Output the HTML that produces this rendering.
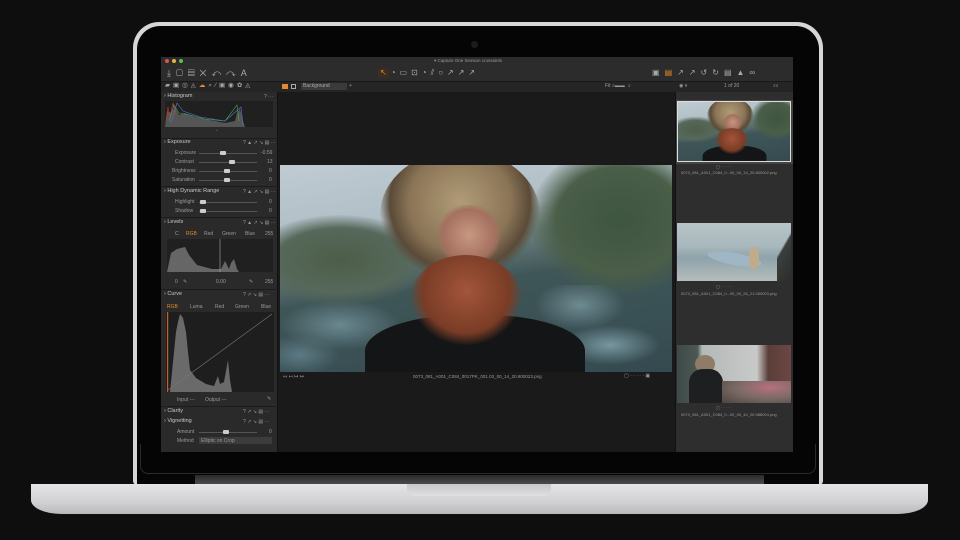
<!DOCTYPE html>
<html><head><meta charset="utf-8">
<style>
*{margin:0;padding:0;box-sizing:border-box}
body{width:960px;height:540px;background:#0e0e0e;position:relative;overflow:hidden;font-family:"Liberation Sans",sans-serif;color:#aaa}
.a{position:absolute}
.t{position:absolute;font-size:5px;color:#9a9a9a;white-space:nowrap;line-height:6px}
.h{position:absolute;font-size:5.5px;color:#c8c8c8;white-space:nowrap;line-height:7px}
.sl{position:absolute;height:1px;background:#555}
.kn{position:absolute;width:6px;height:4px;background:#ccc;border-radius:1px}
.ph{position:absolute;left:0;top:0;width:392px;height:207px;overflow:hidden;
background:linear-gradient(172deg,#c0cbd2 0%,#b0bec6 28%,#6e8280 38%,#3f5658 55%,#344a50 100%)}
.ph div{position:absolute}
</style></head><body>
<!-- lid -->
<div class="a" style="left:133px;top:22px;width:690px;height:463px;background:#d6d6d8;border-radius:26px 26px 4px 4px"></div>
<div class="a" style="left:137px;top:26px;width:682px;height:459px;background:#050505;border-radius:23px 23px 2px 2px"></div>
<div class="a" style="left:140px;top:444px;width:676px;height:30px;border:1px solid #2a2a2a;border-top:none;border-radius:0 0 8px 8px"></div>
<div class="a" style="left:471px;top:41px;width:7px;height:7px;border-radius:50%;background:#1c1c1e"></div>
<div class="a" style="left:195px;top:475px;width:569px;height:9px;background:linear-gradient(#2a2a2a,#4a4a4a)"></div>
<!-- base -->
<div class="a" style="left:31px;top:484px;width:897px;height:30px;background:linear-gradient(#e4e4e6,#d2d2d4 60%,#b8b8ba);border-radius:0 0 30px 30px / 0 0 14px 14px"></div>
<div class="a" style="left:407px;top:484px;width:144px;height:12px;background:linear-gradient(#c6c6c8,#e0e0e2);border-radius:0 0 8px 8px"></div>

<!-- screen -->
<div class="a" style="left:161px;top:57px;width:632px;height:395px;background:#1a1a1a;overflow:hidden">
 <div class="a" style="left:0;top:0;width:632px;height:24px;background:#2c2c2c"></div>
 <div class="a" style="left:4px;top:2px;width:4px;height:4px;border-radius:50%;background:#e0524c"></div>
 <div class="a" style="left:11px;top:2px;width:4px;height:4px;border-radius:50%;background:#e0b93a"></div>
 <div class="a" style="left:18px;top:2px;width:4px;height:4px;border-radius:50%;background:#5fbf49"></div>
 <div class="t" style="left:273px;top:1px;font-size:4.5px;color:#999">▾ Capture One Session  crossaints</div>
 <div class="t" style="left:6px;top:11px;font-size:9px;color:#aaa;letter-spacing:5px;line-height:10px">⤓▢▤✕↶↷A</div>
 <div class="a" style="left:217px;top:11px;width:11px;height:10px;background:#3a2e1e;border-radius:1px"></div>
 <div class="t" style="left:219px;top:11px;font-size:8px;color:#b0b0b0;letter-spacing:4px;line-height:10px"><span style="color:#e38a2a">↖</span>◔▭⊡◔⫽○↗↗↗</div>
 <div class="t" style="left:491px;top:11px;font-size:8px;color:#aaa;letter-spacing:5px;line-height:10px">▣<span style="color:#e38a2a">▤</span>↗↗↺↻▤▲∞</div>
 <div class="a" style="left:0;top:24px;width:632px;height:11px;background:#252525;border-top:1px solid #1a1a1a"></div>
 <div class="t" style="left:4px;top:25px;font-size:6.5px;color:#aaa;letter-spacing:3px;line-height:8px">▰▣◎◬<span style="color:#e38a2a">☁</span>⌕⁄▣◉✿◬</div>
 <div class="a" style="left:121px;top:27px;width:6px;height:5px;background:#e38a2a"></div>
 <div class="a" style="left:130px;top:27px;width:5px;height:5px;border:1px solid #aaa"></div>
 <div class="a" style="left:140px;top:26px;width:46px;height:7px;background:#3a3a3a;border-radius:1px"></div>
 <div class="t" style="left:142px;top:26px;color:#aaa">Background</div>
 <div class="t" style="left:188px;top:26px">+</div>
 <div class="t" style="left:444px;top:26px">Fit ⌕▬▬</div>
 <div class="t" style="left:467px;top:26px">⌕</div>
 <div class="t" style="left:518px;top:26px">◉ ⏸</div>
 <div class="t" style="left:563px;top:26px">1 of 20</div>
 <div class="t" style="left:612px;top:26px">⌕⌕</div>

 <!-- left panel -->
 <div class="a" style="left:0;top:35px;width:117px;height:360px;background:#2a2a2a;border-right:1px solid #111"></div>
 <div class="h" style="left:3px;top:36px">› Histogram</div><div class="t" style="left:103px;top:37px">? ⋯</div>
 <div class="a" style="left:4px;top:44px;width:108px;height:26px;background:#202020"></div>
 <svg class="a" style="left:4px;top:44px" width="108" height="26" viewBox="0 0 108 26">
  <path d="M0 26 L2 10 L6 12 L10 6 L14 14 L20 12 L30 16 L45 19 L60 22 L70 20 L72 12 L75 8 L78 20 L80 26Z" fill="#555"/>
  <path d="M1 20 L3 6 L5 16 L8 2 L11 14" stroke="#c33" fill="none" stroke-width=".6"/>
  <path d="M4 20 L9 4 L14 12 L25 14 L40 18 L60 20 L72 4 L74 20" stroke="#4a4" fill="none" stroke-width=".6"/>
  <path d="M6 22 L12 2 L18 10 L35 16 L60 20 L76 6 L78 24" stroke="#57c" fill="none" stroke-width=".6"/>
 </svg>
 <div class="t" style="left:55px;top:71px">▫</div>
 <div class="a" style="left:0;top:81px;width:117px;height:1px;background:#1c1c1c"></div>
 <div class="h" style="left:3px;top:82px">› Exposure</div><div class="t" style="left:82px;top:83px">? ▲ ↗ ↘ ▤ ⋯</div>
 <div class="t" style="left:14px;top:93px">Exposure</div><div class="sl" style="left:38px;top:96px;width:58px"></div><div class="kn" style="left:59px;top:94px"></div><div class="t" style="left:100px;top:93px">-0.59</div>
 <div class="t" style="left:14px;top:102px">Contrast</div><div class="sl" style="left:38px;top:105px;width:58px"></div><div class="kn" style="left:68px;top:103px"></div><div class="t" style="left:106px;top:102px">13</div>
 <div class="t" style="left:11px;top:111px">Brightness</div><div class="sl" style="left:38px;top:114px;width:58px"></div><div class="kn" style="left:63px;top:112px"></div><div class="t" style="left:108px;top:111px">0</div>
 <div class="t" style="left:11px;top:120px">Saturation</div><div class="sl" style="left:38px;top:123px;width:58px"></div><div class="kn" style="left:63px;top:121px"></div><div class="t" style="left:108px;top:120px">0</div>
 <div class="a" style="left:0;top:129px;width:117px;height:1px;background:#1c1c1c"></div>
 <div class="h" style="left:3px;top:131px">› High Dynamic Range</div><div class="t" style="left:82px;top:132px">? ▲ ↗ ↘ ▤ ⋯</div>
 <div class="t" style="left:14px;top:142px">Highlight</div><div class="sl" style="left:38px;top:145px;width:58px"></div><div class="kn" style="left:39px;top:143px"></div><div class="t" style="left:108px;top:142px">0</div>
 <div class="t" style="left:14px;top:151px">Shadow</div><div class="sl" style="left:38px;top:154px;width:58px"></div><div class="kn" style="left:39px;top:152px"></div><div class="t" style="left:108px;top:151px">0</div>
 <div class="a" style="left:0;top:160px;width:117px;height:1px;background:#1c1c1c"></div>
 <div class="h" style="left:3px;top:162px">› Levels</div><div class="t" style="left:82px;top:163px">? ▲ ↗ ↘ ▤ ⋯</div>
 <div class="t" style="left:14px;top:174px">C</div><div class="t" style="left:25px;top:174px;color:#e38a2a">RGB</div><div class="t" style="left:43px;top:174px">Red</div><div class="t" style="left:61px;top:174px">Green</div><div class="t" style="left:84px;top:174px">Blue</div><div class="t" style="left:104px;top:174px">255</div>
 <div class="a" style="left:6px;top:182px;width:106px;height:33px;background:#202020"></div>
 <svg class="a" style="left:6px;top:182px" width="106" height="33" viewBox="0 0 106 33"><path d="M0 33 L4 14 L10 10 L18 8 L22 16 L30 26 L45 30 L54 30 L58 22 L62 30 L64 24 L67 20 L70 30 L72 33Z" fill="#666"/><path d="M53 0 V33" stroke="#aaa" stroke-width=".6"/></svg>
 <div class="t" style="left:14px;top:222px">0</div><div class="t" style="left:22px;top:222px">✎</div><div class="t" style="left:55px;top:222px">0.00</div><div class="t" style="left:88px;top:222px">✎</div><div class="t" style="left:104px;top:222px">255</div>
 <div class="a" style="left:0;top:232px;width:117px;height:1px;background:#1c1c1c"></div>
 <div class="h" style="left:3px;top:234px">› Curve</div><div class="t" style="left:82px;top:235px">? ↗ ↘ ▤ ⋯</div>
 <div class="t" style="left:6px;top:247px;color:#e38a2a">RGB</div><div class="t" style="left:29px;top:247px">Luma</div><div class="t" style="left:54px;top:247px">Red</div><div class="t" style="left:74px;top:247px">Green</div><div class="t" style="left:100px;top:247px">Blue</div>
 <div class="a" style="left:5px;top:255px;width:108px;height:80px;background:#1e1e1e"></div>
 <svg class="a" style="left:5px;top:255px" width="108" height="80" viewBox="0 0 108 80"><path d="M4 80 L6 60 L8 40 L10 20 L12 10 L14 2 L17 6 L20 20 L22 40 L24 58 L30 66 L40 72 L48 74 L52 64 L54 72 L58 70 L62 48 L64 68 L66 80Z" fill="#6a6a6a"/><path d="M2 78 L106 2" stroke="#777" stroke-width=".6"/><rect x="1" y="0" width="1.2" height="80" fill="#c0622a"/></svg>
 <div class="t" style="left:16px;top:340px">Input ---</div><div class="t" style="left:44px;top:340px">Output ---</div><div class="t" style="left:106px;top:339px">✎</div>
 <div class="a" style="left:0;top:349px;width:117px;height:1px;background:#1c1c1c"></div>
 <div class="h" style="left:3px;top:351px">› Clarity</div><div class="t" style="left:82px;top:352px">? ↗ ↘ ▤ ⋯</div>
 <div class="h" style="left:3px;top:361px">› Vignetting</div><div class="t" style="left:82px;top:362px">? ↗ ↘ ▤ ⋯</div>
 <div class="t" style="left:16px;top:372px">Amount</div><div class="sl" style="left:38px;top:375px;width:58px"></div><div class="kn" style="left:62px;top:373px"></div><div class="t" style="left:108px;top:372px">0</div>
 <div class="t" style="left:16px;top:381px">Method</div><div class="a" style="left:38px;top:380px;width:73px;height:7px;background:#3c3c3c"></div><div class="t" style="left:40px;top:381px">Elliptic on Crop</div>

 <!-- viewer photo -->
 <div class="a" style="left:119px;top:108px;width:392px;height:207px;overflow:hidden">
  <div class="ph">
   <div style="left:250px;top:-20px;width:180px;height:150px;border-radius:50%;background:radial-gradient(ellipse at 50% 50%,#3e5540,#4a5e48 50%,transparent 72%)"></div>
   <div style="left:-30px;top:50px;width:180px;height:90px;border-radius:50%;background:radial-gradient(ellipse,#4d5e48,#56685a 50%,transparent 72%)"></div>
   <div style="left:0;top:120px;width:392px;height:87px;background:radial-gradient(ellipse 60px 25px at 60px 40px,#6a8890,transparent),radial-gradient(ellipse 50px 20px at 330px 60px,#7896a0,transparent),radial-gradient(ellipse 45px 25px at 300px 20px,#6e8a92,transparent),radial-gradient(ellipse 40px 20px at 20px 70px,#5c7a84,transparent)"></div>
   <div style="left:85px;top:150px;width:220px;height:80px;background:#131516;border-radius:45% 45% 0 0"></div>
   <div style="left:100px;top:-15px;width:160px;height:130px;border-radius:50%;background:radial-gradient(ellipse at 50% 40%,#b19c78,#8a7456 45%,#5a4a38 62%,transparent 72%)"></div>
   <div style="left:158px;top:40px;width:62px;height:60px;border-radius:45%;background:radial-gradient(ellipse at 50% 50%,#c89880,#a47060 60%,transparent 75%)"></div>
   <div style="left:130px;top:90px;width:112px;height:90px;border-radius:50%;background:radial-gradient(ellipse at 50% 40%,#a2553a,#7a3c26 55%,transparent 72%)"></div>
  </div>
 </div>
 <div class="t" style="left:252px;top:317px;font-size:4.5px">0073_081_A001_C084_0017PK_001.03_00_14_20.800023.png</div>
 <div class="t" style="left:122px;top:317px">↤ ↤ ↦ ↦</div>
 <div class="t" style="left:463px;top:316px">▢ · · · · · ▣</div>

 <!-- filmstrip -->
 <div class="a" style="left:514px;top:35px;width:118px;height:360px;background:#2e2e2e;border-left:1px solid #111"></div>
 <div class="a" style="left:515px;top:43px;width:117px;height:64px;background:#444"></div>
 <div class="a" style="left:516px;top:44px;width:114px;height:61px;border:1px solid #ddd;overflow:hidden">
  <div style="position:absolute;left:0;top:0;width:392px;height:207px;transform:scale(0.29);transform-origin:0 0">
   <div class="ph">
    <div style="left:250px;top:-20px;width:180px;height:150px;border-radius:50%;background:radial-gradient(ellipse at 50% 50%,#3e5540,#4a5e48 50%,transparent 72%)"></div>
    <div style="left:-30px;top:50px;width:180px;height:90px;border-radius:50%;background:radial-gradient(ellipse,#4d5e48,#56685a 50%,transparent 72%)"></div>
    <div style="left:85px;top:150px;width:220px;height:80px;background:#131516;border-radius:45% 45% 0 0"></div>
    <div style="left:100px;top:-15px;width:160px;height:130px;border-radius:50%;background:radial-gradient(ellipse at 50% 40%,#b19c78,#8a7456 45%,#5a4a38 62%,transparent 72%)"></div>
    <div style="left:158px;top:40px;width:62px;height:60px;border-radius:45%;background:radial-gradient(ellipse at 50% 50%,#c89880,#a47060 60%,transparent 75%)"></div>
    <div style="left:130px;top:90px;width:112px;height:90px;border-radius:50%;background:radial-gradient(ellipse at 50% 40%,#a2553a,#7a3c26 55%,transparent 72%)"></div>
   </div>
  </div>
 </div>
 <div class="t" style="left:555px;top:107px;font-size:4px">▢ · · · · ·</div>
 <div class="t" style="left:520px;top:113px;font-size:4px">0073_081_A001_C084_0...00_00_14_20.800002.png</div>

 <div class="a" style="left:516px;top:166px;width:114px;height:58px;overflow:hidden;background:linear-gradient(180deg,#b8c4c8 0%,#a8b8bc 40%,#8ea3aa 60%,#b6bcbc 100%)">
  <div class="a" style="left:30px;top:30px;width:55px;height:12px;border-radius:50%;background:#9fb6c4;transform:rotate(10deg)"></div>
  <div class="a" style="left:72px;top:24px;width:10px;height:22px;background:#c0ab8a;border-radius:40%"></div>
  <div class="a" style="left:100px;top:0;width:14px;height:58px;background:linear-gradient(120deg,transparent 40%,#3b3f3c 45%,#2a2d2a)"></div>
 </div>
 <div class="t" style="left:555px;top:227px;font-size:4px">▢ · · · · ·</div>
 <div class="t" style="left:520px;top:234px;font-size:4px">0073_081_A001_C084_0...00_00_26_21.050003.png</div>

 <div class="a" style="left:516px;top:288px;width:114px;height:58px;overflow:hidden;background:linear-gradient(90deg,#3f4a48 0%,#4c5854 18%,#b4b8b6 22%,#c8cac8 70%,#5a3e38 80%,#6c4644 100%)">
  <div class="a" style="left:18px;top:10px;width:20px;height:18px;border-radius:50%;background:#8e7c68"></div>
  <div class="a" style="left:12px;top:24px;width:34px;height:34px;border-radius:40% 40% 0 0;background:#1e1f20"></div>
  <div class="a" style="left:45px;top:36px;width:69px;height:22px;background:radial-gradient(ellipse at 70% 30%,#b77080,#7a6a64 50%,#4a4442)"></div>
 </div>
 <div class="t" style="left:555px;top:348px;font-size:4px">▢ · · · · ·</div>
 <div class="t" style="left:520px;top:355px;font-size:4px">0073_081_A001_C084_0...00_00_44_20.988004.png</div>
</div>
</body></html>
